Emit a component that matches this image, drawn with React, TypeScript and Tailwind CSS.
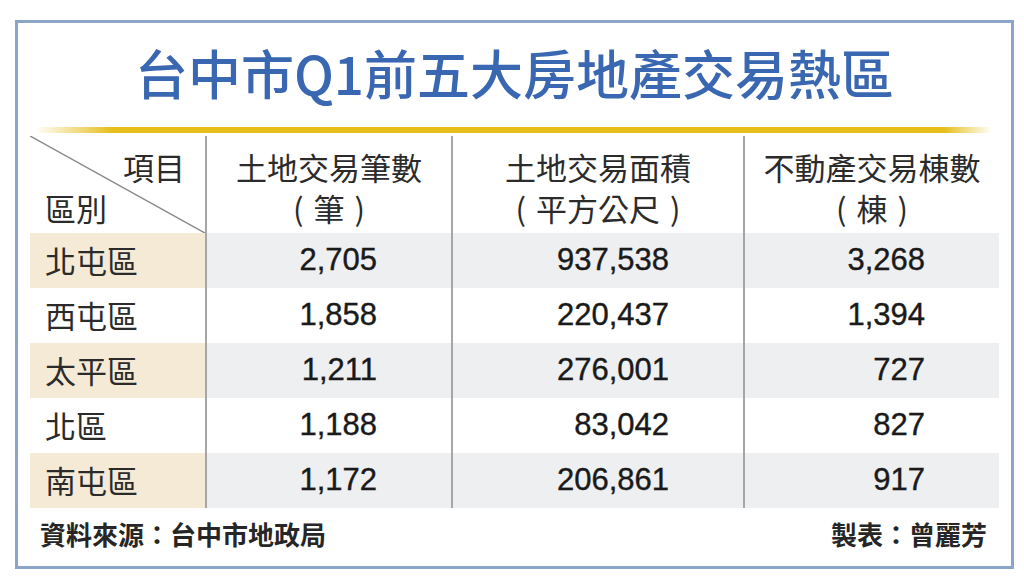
const cjk = "font-['Noto_Sans_CJK_TC',sans-serif]"

const rows = [
  { name: "北屯區", a: "2,705", b: "937,538", c: "3,268", shade: true },
  { name: "西屯區", a: "1,858", b: "220,437", c: "1,394", shade: false },
  { name: "太平區", a: "1,211", b: "276,001", c: "727", shade: true },
  { name: "北區", a: "1,188", b: "83,042", c: "827", shade: false },
  { name: "南屯區", a: "1,172", b: "206,861", c: "917", shade: true },
]

const headers = [
  ["土地交易筆數", "筆"],
  ["土地交易面積", "平方公尺"],
  ["不動產交易棟數", "棟"],
]

export default function App() {
  return (
    <div className="h-[583px] w-[1024px] overflow-hidden bg-white pt-[20px] pl-[15px]">
      <div className="flex h-[549px] w-[999px] flex-col border-[3px] border-[#8ca4c8] px-[12px]">
        {/* title */}
        <div className="flex h-[104px] items-center justify-center pb-[6px]">
          <h1 className={`${cjk} text-[53px] font-medium leading-none text-[#3a67b1]`}>
            台中市Q1前五大房地產交易熱區
          </h1>
        </div>

        <div className="mr-[7px] ml-[5px] h-[6px] bg-[linear-gradient(90deg,rgba(232,194,26,0)_0%,#e6bf1c_8%,#e6bf1c_95%,rgba(232,194,26,0)_100%)]" />

        {/* table */}
        <div className="mt-[3px] grid grid-cols-[175px_246px_292px_256px]">
          <div className={`${cjk} relative h-[97px] text-[31px] leading-[41px] text-[#2b2b2b]`}>
            <svg className="absolute inset-0" width="175" height="97" viewBox="0 0 175 97">
              <line x1="0" y1="0" x2="175" y2="97" stroke="#8a8a8a" strokeWidth="1.5" />
            </svg>
            <div className="pt-[10px] pr-[20px] text-right">項目</div>
            <div className="pl-[15px]">區別</div>
          </div>
          {headers.map(([l1, unit]) => (
            <div
              key={l1}
              className={`${cjk} h-[97px] border-l-2 border-[#a6a6a6] pt-[10px] text-center text-[31px] leading-[41px] text-[#2b2b2b]`}
            >
              <div>{l1}</div>
              <div>
                <span className="mr-[10px]">(</span>
                {unit}
                <span className="ml-[10px]">)</span>
              </div>
            </div>
          ))}

          {rows.map((r) => (
            <Row key={r.name} {...r} />
          ))}
        </div>

        {/* footer */}
        <div className={`${cjk} flex h-[58px] justify-between pt-[10px] pr-[12px] pl-[10px] text-[26px] font-bold leading-[31px] text-[#262626]`}>
          <span>資料來源：台中市地政局</span>
          <span>製表：曾麗芳</span>
        </div>
      </div>
    </div>
  )
}

function Row({ name, a, b, c, shade }: { name: string; a: string; b: string; c: string; shade: boolean }) {
  const num = "flex h-[55px] items-center justify-end border-l-2 border-[#a6a6a6] pr-[74px] font-['Liberation_Sans',sans-serif] text-[31px] text-[#1a1a1a] [-webkit-text-stroke:0.4px_#1a1a1a]"
  const bg = shade ? "bg-[#eeeff1]" : "bg-white"
  return (
    <>
      <div className={`${cjk} flex h-[55px] items-center pl-[15px] text-[31px] text-[#2b2b2b] ${shade ? "bg-[#f5ead6]" : "bg-white"}`}>
        {name}
      </div>
      <div className={`${num} ${bg}`}>{a}</div>
      <div className={`${num} ${bg}`}>{b}</div>
      <div className={`${num} ${bg}`}>{c}</div>
    </>
  )
}
